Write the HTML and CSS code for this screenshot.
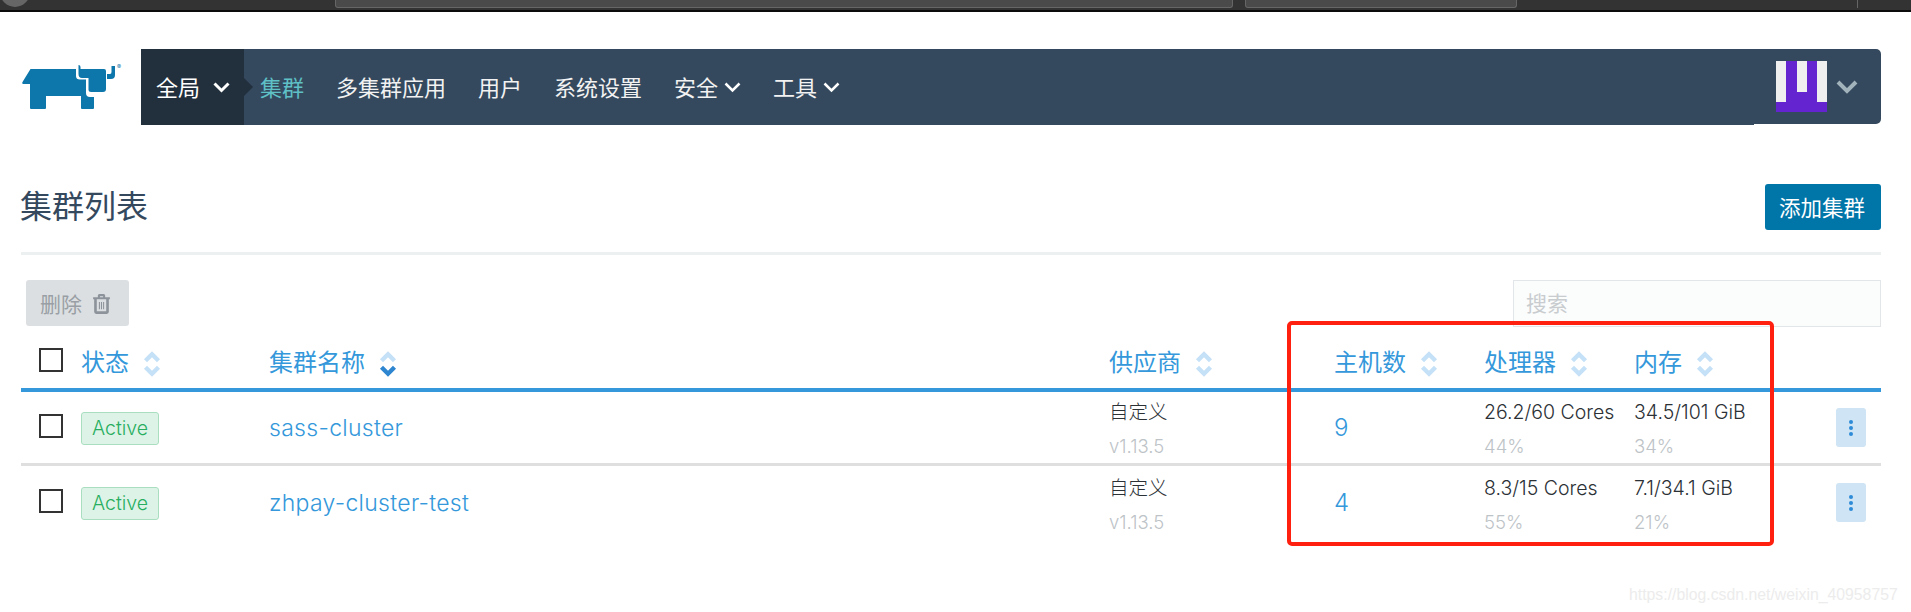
FILE: index.html
```html
<!DOCTYPE html>
<html lang="zh-CN">
<head>
  <meta charset="UTF-8">
  <title>集群列表</title>
  <link rel="stylesheet" href="styles.css">
</head>
<body>

  <div class="browser-bar">
    <span class="browser-circle"></span>
    <span class="browser-field field-wide"></span>
    <span class="browser-field field-small"></span>
    <span class="browser-rule"></span>
  </div>

  <div class="page">
    <header class="app-header">
      <svg class="logo" viewBox="0 0 115 65" width="115" height="65">
        <path fill="#0d76aa" d="M15.5 14H61V21Q61 24.5 65 24.5H71V38Q71 42 75 42H79V53Q79 54 78 54H67Q66 54 66 53V41H31V53Q31 54 30 54H16Q15 54 15 53V29H8Q6.5 28.500 7.500 27Z"/>
        <path fill="#0d76aa" d="M67 14H89Q91 14 91 16V34Q91 37 88 37H76Q73.500 37 73.500 35V23H67Q63.500 23 63.500 19V10Q65.500 10 65.500 12V14ZM96.500 11H100V20Q100 24 96 24H92V19H95Q96.500 19 96.500 17Z"/>
        <text x="102" y="14" class="logo-mark">®</text>
      </svg>

      <nav class="nav-main">
        <div class="nav-scope">全局
          <svg class="chevron" viewBox="0 0 16 12"><path d="M1 2.500l7 7 7-7"/></svg>
        </div>
        <a class="nav-link active">集群</a>
        <a class="nav-link">多集群应用</a>
        <a class="nav-link">用户</a>
        <a class="nav-link">系统设置</a>
        <a class="nav-link">安全 <svg class="chevron small" viewBox="0 0 16 12"><path d="M1 2.500l7 7 7-7"/></svg></a>
        <a class="nav-link">工具 <svg class="chevron small" viewBox="0 0 16 12"><path d="M1 2.500l7 7 7-7"/></svg></a>
      </nav>

      <div class="nav-user">
        <div class="avatar">
          <span class="avatar-bar bar-long"></span>
          <span class="avatar-bar bar-short"></span>
          <span class="avatar-bar bar-long"></span>
        </div>
        <svg class="user-chevron" viewBox="0 0 22 14"><path d="M2 2l9 9 9-9"/></svg>
      </div>
    </header>

    <section class="title-row">
      <h1>集群列表</h1>
      <button class="btn-add">添加集群</button>
    </section>

    <div class="toolbar">
      <button class="btn-delete">删除
        <svg class="trash" viewBox="0 0 18 21"><path d="M5.500 4V2.500Q5.500 1 7 1H11Q12.500 1 12.500 2.500V4H17V6H16V18Q16 20 14 20H4Q2 20 2 18V6H1V4ZM7.500 4H10.500V3H7.500ZM4.500 6V17.500H13.500V6ZM6.500 8.500H7.500V15.500H6.500ZM8.500 8.500H9.500V15.500H8.500ZM10.500 8.500H11.500V15.500H10.500Z"/></svg>
      </button>
      <input class="search" type="text" placeholder="搜索">
    </div>

    <table class="cluster-table">
      <colgroup>
        <col class="col-check"><col class="col-state"><col class="col-name"><col class="col-provider">
        <col class="col-hosts"><col class="col-cpu"><col class="col-mem"><col class="col-action">
      </colgroup>
      <thead>
        <tr>
          <th><span class="check"></span></th>
          <th>状态 <svg class="sort" viewBox="0 0 16 24"><path class="sort-up" d="M2 9l6-6 6 6"/><path class="sort-down" d="M2 15l6 6 6-6"/></svg></th>
          <th>集群名称 <svg class="sort" viewBox="0 0 16 24"><path class="sort-up" d="M2 9l6-6 6 6"/><path class="sort-down on" d="M2 15l6 6 6-6"/></svg></th>
          <th>供应商 <svg class="sort" viewBox="0 0 16 24"><path class="sort-up" d="M2 9l6-6 6 6"/><path class="sort-down" d="M2 15l6 6 6-6"/></svg></th>
          <th>主机数 <svg class="sort" viewBox="0 0 16 24"><path class="sort-up" d="M2 9l6-6 6 6"/><path class="sort-down" d="M2 15l6 6 6-6"/></svg></th>
          <th>处理器 <svg class="sort" viewBox="0 0 16 24"><path class="sort-up" d="M2 9l6-6 6 6"/><path class="sort-down" d="M2 15l6 6 6-6"/></svg></th>
          <th>内存 <svg class="sort" viewBox="0 0 16 24"><path class="sort-up" d="M2 9l6-6 6 6"/><path class="sort-down" d="M2 15l6 6 6-6"/></svg></th>
          <th></th>
        </tr>
      </thead>
      <tbody>
        <tr>
          <td><span class="check"></span></td>
          <td><span class="badge">Active</span></td>
          <td><a class="cluster-name">sass-cluster</a></td>
          <td><div class="main-text">自定义</div><div class="sub-text">v1.13.5</div></td>
          <td><a class="host-count">9</a></td>
          <td><div class="main-text">26.2/60 Cores</div><div class="sub-text">44%</div></td>
          <td><div class="main-text">34.5/101 GiB</div><div class="sub-text">34%</div></td>
          <td><button class="btn-more"><span></span><span></span><span></span></button></td>
        </tr>
        <tr>
          <td><span class="check"></span></td>
          <td><span class="badge">Active</span></td>
          <td><a class="cluster-name">zhpay-cluster-test</a></td>
          <td><div class="main-text">自定义</div><div class="sub-text">v1.13.5</div></td>
          <td><a class="host-count">4</a></td>
          <td><div class="main-text">8.3/15 Cores</div><div class="sub-text">55%</div></td>
          <td><div class="main-text">7.1/34.1 GiB</div><div class="sub-text">21%</div></td>
          <td><button class="btn-more"><span></span><span></span><span></span></button></td>
        </tr>
      </tbody>
    </table>
  </div>

  <!-- marca de revisao e watermark por cima da pagina -->
  <div class="red-box"></div>
  <div class="watermark">https://blog.csdn.net/weixin_40958757</div>

</body>
</html>
```

FILE: styles.css
```css
body {
  margin: 0;
  background: #fff;
  color: #3a3f44;
  font-family: Inter, "Noto Sans CJK SC", sans-serif;
  position: relative;
  height: 612px;
  overflow: hidden;
}

/* browser chrome */
.browser-bar {
  height: 10px;
  background: #333;
  border-bottom: 2px solid #0c0c0c;
  display: flex;
  align-items: flex-start;
}

.browser-circle {
  width: 30px;
  height: 30px;
  margin-top: -23px;
  border-radius: 50%;
  background: #666;
}

.browser-field {
  height: 7px;
  background: #4a4a4a;
  border: 1px solid #666;
  border-top: 0;
  border-radius: 0 0 3px 3px;
}

.field-wide { width: 896px; margin-left: 305px; }
.field-small { width: 270px; margin-left: 12px; }

.browser-rule {
  width: 1px;
  height: 8px;
  margin-left: 340px;
  background: #666;
}

.page {
  padding: 0 30px 0 21px;
}

/* header */
.app-header {
  display: flex;
  align-items: flex-start;
  margin-top: 37px;
  margin-left: -6px;
}

.logo {
  flex: none;
  margin-top: 6px;
  margin-right: 11px;
}

.logo-mark {
  font-size: 6px;
  fill: #0d76aa;
}

.nav-main {
  flex: 1;
  height: 76px;
  display: flex;
  align-items: center;
  gap: 32px;
  background: #34495e;
  border-radius: 3px 0 0 3px;
  color: #f2f2f2;
  font-size: 22px;
}

.nav-scope {
  position: relative;
  align-self: stretch;
  display: flex;
  align-items: center;
  gap: 13px;
  width: 88px;
  padding: 0 0 3px 15px;
  margin-right: -16px;
  background: #222f3d;
  color: #fff;
}

.nav-scope::after {
  content: "";
  position: absolute;
  left: 100%;
  top: 29px;
  border: 9px solid transparent;
  border-left-color: #222f3d;
}

.nav-link {
  display: flex;
  align-items: center;
  gap: 6px;
  padding-bottom: 3px;
  white-space: nowrap;
}

.nav-link.active {
  color: #5fc0c6;
}

.chevron {
  width: 17px;
  height: 12px;
  margin-top: 3px;
  fill: none;
  stroke: #fff;
  stroke-width: 3;
}

.chevron.small {
  stroke-width: 2.500;
}

.nav-user {
  flex: none;
  width: 127px;
  height: 75px;
  box-sizing: border-box;
  padding: 12px 0 0 22px;
  display: flex;
  align-items: flex-start;
  gap: 9px;
  background: #34495e;
  border-radius: 0 5px 5px 0;
}

.avatar {
  width: 51px;
  height: 51px;
  flex: none;
  display: flex;
  justify-content: space-between;
  background: #6425d0;
}

.avatar-bar {
  width: 10px;
  background: #efefef;
}

.bar-long { height: 41px; }
.bar-short { height: 31px; }

.user-chevron {
  width: 22px;
  height: 14px;
  margin-top: 19px;
  fill: none;
  stroke: #a3b3bc;
  stroke-width: 4;
}

/* title */
.title-row {
  display: flex;
  justify-content: space-between;
  align-items: flex-end;
  margin-top: 59px;
  padding-bottom: 22px;
  border-bottom: 3px solid #ecf0f1;
}

h1 {
  margin: 0 0 0 -1px;
  font-size: 32px;
  font-weight: 400;
  line-height: 46px;
  color: #34495e;
}

.btn-add {
  width: 116px;
  height: 46px;
  padding: 0 2px 2px 0;
  border: 0;
  border-radius: 3px;
  background: #0075a8;
  color: #fff;
  font-family: inherit;
  font-size: 21.500px;
}

.toolbar {
  display: flex;
  justify-content: space-between;
  margin-top: 25px;
  padding-left: 5px;
}

.btn-delete {
  width: 103px;
  height: 46px;
  padding: 0 0 0 14px;
  display: flex;
  align-items: center;
  gap: 10px;
  border: 0;
  border-radius: 3px;
  background: #dcdfe2;
  color: #9a9fa5;
  font-family: inherit;
  font-size: 21px;
}

.trash {
  width: 19px;
  height: 22px;
  margin-top: 1px;
  fill: #8d939a;
  fill-rule: evenodd;
}

.search {
  width: 368px;
  height: 47px;
  box-sizing: border-box;
  padding: 0 12px;
  border: 1px solid #e2e6e8;
  background: #fbfcfc;
  font-family: inherit;
  font-size: 21px;
}

.search::placeholder {
  color: #c8cccf;
}

/* table */
.cluster-table {
  width: 1860px;
  table-layout: fixed;
  border-collapse: separate;
  border-spacing: 0;
}

.col-check { width: 60px; }
.col-state { width: 188px; }
.col-name { width: 840px; }
.col-provider { width: 225px; }
.col-hosts { width: 150px; }
.col-cpu { width: 150px; }
.col-mem { width: 202px; }
.col-action { width: 45px; }

th {
  height: 55px;
  padding: 6px 0 0;
  box-sizing: content-box;
  border-bottom: 4px solid #3498db;
  text-align: left;
  vertical-align: middle;
  color: #3498db;
  font-size: 24px;
  font-weight: 400;
}

th .check {
  margin-top: -2px;
}

td {
  height: 71px;
  padding: 0;
  vertical-align: middle;
}

tbody tr:first-child td {
  border-bottom: 3px solid #dfdfdf;
}

tbody tr:last-child td {
  height: 73px;
}

.check {
  display: block;
  box-sizing: border-box;
  width: 24px;
  height: 24px;
  margin-left: 18px;
  border: 2px solid #333;
  background: #fff;
}

td .check {
  margin-top: -4px;
}

.sort {
  width: 18px;
  height: 26px;
  margin-left: 7px;
  vertical-align: middle;
  fill: none;
  stroke-width: 4;
}

.sort-up, .sort-down { stroke: #c5e1f7; }
.sort-down.on { stroke: #2e86d0; }

.badge {
  display: block;
  box-sizing: border-box;
  width: 78px;
  height: 33px;
  margin-top: 1px;
  line-height: 31px;
  text-align: center;
  border: 1px solid #a9dfc0;
  border-radius: 3px;
  background: #def3e7;
  color: #27ae60;
  font-size: 19.500px;
  font-weight: 300;
}

.cluster-name {
  color: #3498db;
  font-size: 23px;
  font-weight: 300;
  letter-spacing: 0.300px;
}

.host-count {
  color: #3498db;
  font-size: 24px;
  font-weight: 300;
}

.main-text {
  margin-top: 2px;
  font-size: 19.500px;
  line-height: 28px;
  font-weight: 300;
  color: #2c3136;
  white-space: nowrap;
}

tbody tr:last-child .main-text {
  margin-top: 5px;
}

.sub-text {
  margin-top: 6px;
  font-size: 18.500px;
  line-height: 28px;
  font-weight: 300;
  color: #bdc3c7;
}

.btn-more {
  display: flex;
  flex-direction: column;
  align-items: center;
  justify-content: center;
  gap: 2px;
  width: 30px;
  height: 39px;
  padding: 0;
  border: 0;
  border-radius: 3px;
  background: #cfe4f5;
}

.btn-more span {
  width: 4px;
  height: 4px;
  border-radius: 50%;
  background: #2e8bd8;
}

/* overlays */
.red-box {
  position: absolute;
  left: 1287px;
  top: 321px;
  width: 479px;
  height: 217px;
  border: 4px solid #ff2010;
  border-radius: 5px;
}

.watermark {
  position: absolute;
  left: 1629px;
  top: 586px;
  font-family: "Liberation Sans", sans-serif;
  font-size: 15.800px;
  color: #ececec;
}
```
